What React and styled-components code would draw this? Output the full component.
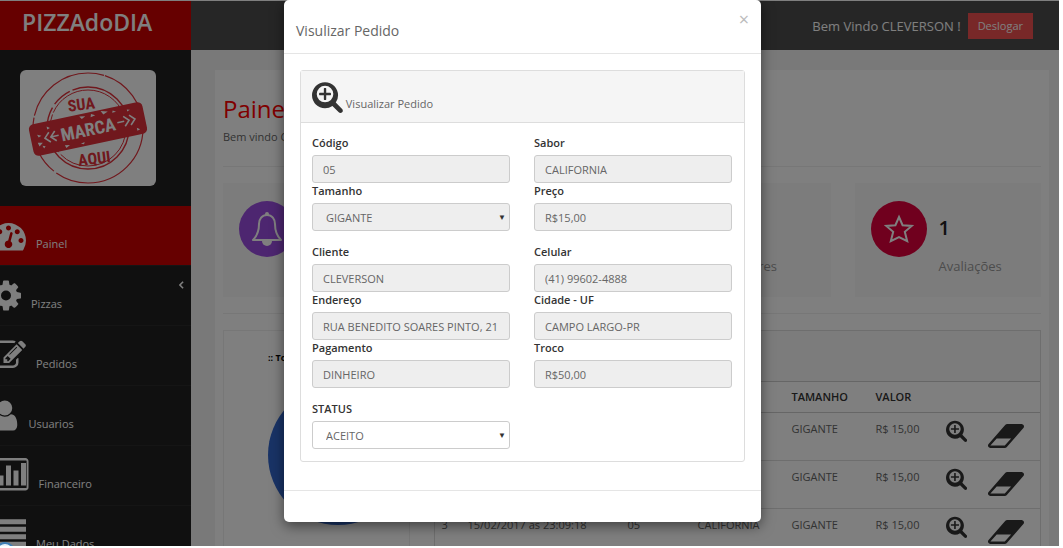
import styled, { createGlobalStyle } from "styled-components";

const GlobalStyle = createGlobalStyle`
  * {
    box-sizing: border-box;
  }
  body {
    margin: 0;
    background: #fff;
    font-family: "Open Sans", "Noto Sans", sans-serif;
    font-size: 11px;
    line-height: 18px;
    color: #666;
  }
  input,
  select,
  button {
    font-family: inherit;
  }
`;

const icons = {
  painel: {
    box: "0 0 1792 1792",
    d: "M384 1152q0-53-37.5-90.5t-90.5-37.5-90.5 37.5-37.5 90.5 37.5 90.5 90.5 37.5 90.5-37.5 37.5-90.5zm192-448q0-53-37.5-90.5t-90.5-37.5-90.5 37.5-37.5 90.5 37.5 90.5 90.5 37.5 90.5-37.5 37.5-90.5zm428 481l101-382q6-26-7.5-48.5t-38.5-29.5-48 6.5-30 39.5l-101 382q-60 5-107 43.5t-63 98.5q-20 77 20 146t117 89 146-20 89-117q16-60-6-117t-72-91zm660-33q0-53-37.5-90.5t-90.5-37.5-90.5 37.5-37.5 90.5 37.5 90.5 90.5 37.5 90.5-37.5 37.5-90.5zm-640-640q0-53-37.5-90.5t-90.5-37.5-90.5 37.5-37.5 90.5 37.5 90.5 90.5 37.5 90.5-37.5 37.5-90.5zm448 192q0-53-37.5-90.5t-90.5-37.5-90.5 37.5-37.5 90.5 37.5 90.5 90.5 37.5 90.5-37.5 37.5-90.5zm320 448q0 261-141 483-19 29-54 29h-1402q-35 0-54-29-141-221-141-483 0-182 71-348t191-286 286-191 348-71 348 71 286 191 191 286 71 348z",
  },
  pizzas: {
    box: "0 0 1536 1792",
    d: "M1024 896q0-106-75-181t-181-75-181 75-75 181 75 181 181 75 181-75 75-181zm512-109v222q0 12-8 23t-20 13l-185 28q-19 54-39 91 35 50 107 138 10 12 10 25t-9 23q-27 37-99 108t-94 71q-12 0-26-9l-138-108q-44 23-91 38-16 136-29 186-7 28-36 28h-222q-14 0-24.5-8.5t-11.5-21.5l-28-184q-49-16-90-37l-141 107q-10 9-25 9-14 0-25-11-126-114-165-168-7-10-7-23 0-12 8-23 15-21 51-66.5t54-70.5q-27-50-41-99l-183-27q-13-2-21-12.5t-8-23.5v-222q0-12 8-23t19-13l186-28q14-46 39-92-40-57-107-138-10-12-10-24 0-10 9-23 26-36 98.5-107.5t94.5-71.5q13 0 26 10l138 107q44-23 91-38 16-136 29-186 7-28 36-28h222q14 0 24.5 8.5t11.5 21.5l28 184q49 16 90 37l142-107q9-9 24-9 13 0 25 10 129 119 165 170 7 8 7 22 0 12-8 23-15 21-51 66.5t-54 70.5q26 50 41 98l183 28q13 2 21 12.5t8 23.5z",
  },
  pedidos: {
    box: "0 0 1792 1792",
    d: "M888 1184l116-116-152-152-116 116v56h96v96h56zm440-720q-16-16-33 1l-350 350q-17 17-1 33t33-1l350-350q17-17 1-33zm80 594v190q0 119-84.5 203.5t-203.5 84.5h-832q-119 0-203.5-84.5t-84.5-203.5v-832q0-119 84.5-203.5t203.5-84.5h832q63 0 117 25 15 7 18 23 3 17-9 29l-49 49q-14 14-32 8-23-6-45-6h-832q-66 0-113 47t-47 113v832q0 66 47 113t113 47h832q66 0 113-47t47-113v-126q0-13 9-22l64-64q15-15 35-7t20 29zm-96-738l288 288-672 672h-288v-288zm444 132l-92 92-288-288 92-92q28-28 68-28t68 28l152 152q28 28 28 68t-28 68z",
  },
  usuarios: {
    box: "-64 0 1408 1792",
    d: "M1280 1399q0 109-62.5 187t-150.5 78h-854q-88 0-150.5-78t-62.5-187q0-85 8.5-160.5t31.5-152 58.5-131 94-89 134.5-34.5q131 128 313 128t313-128q76 0 134.5 34.5t94 89 58.5 131 31.5 152 8.5 160.5zm-256-887q0 159-112.5 271.5t-271.5 112.5-271.5-112.5-112.5-271.5 112.5-271.5 271.5-112.5 271.5 112.5 112.5 271.5z",
  },
  financeiro: {
    box: "0 0 1920 1792",
    d: "M640 896v512h-256v-512h256zm384-512v1024h-256v-1024h256zm384 256v768h-256v-768h256zm384-384v1152h-256v-1152h256zm0-128h-1664q-13 0-22.5 9.5t-9.5 22.5v1344q0 13 9.5 22.5t22.5 9.5h1664q13 0 22.5-9.5t9.5-22.5v-1344q0-13-9.5-22.5t-22.5-9.5zm128 32v1344q0 66-47 113t-113 47h-1600q-66 0-113-47t-47-113v-1344q0-66 47-113t113-47h1600q66 0 113 47t47 113z",
  },
  dados: {
    box: "0 0 1792 1792",
    d: "M0 64h1792v256h-1792zM0 448h1792v256h-1792zM0 832h1792v256h-1792zM0 1216h1792v256h-1792z",
  },
  zoom: {
    box: "0 64 1664 1728",
    d: "M1024 736v64q0 13-9.5 22.5t-22.5 9.5h-224v224q0 13-9.5 22.5t-22.5 9.5h-64q-13 0-22.5-9.5t-9.5-22.5v-224h-224q-13 0-22.5-9.5t-9.5-22.5v-64q0-13 9.5-22.5t22.5-9.5h224v-224q0-13 9.5-22.5t22.5-9.5h64q13 0 22.5 9.5t9.5 22.5v224h224q13 0 22.5 9.5t9.5 22.5zm128 32q0-185-131.5-316.5t-316.5-131.5-316.5 131.5-131.5 316.5 131.5 316.5 316.5 131.5 316.5-131.5 131.5-316.5zm512 896q0 53-37.5 90.5t-90.5 37.5q-54 0-90-38l-343-342q-179 124-399 124-143 0-273.5-55.5t-225-150-150-225-55.5-273.5 55.5-273.5 150-225 225-150 273.5-55.5 273.5 55.5 225 150 150 225 55.5 273.5q0 220-124 399l343 343q37 37 37 90z",
  },
  eraser: {
    box: "0 256 1920 1280",
    d: "M896 1408l336-384h-768l-336 384h768zm1013-1077q15 34 9.5 71.5t-30.5 65.5l-896 1024q-38 44-96 44h-768q-38 0-69.5-20.5t-47.5-54.5q-15-34-9.5-71.5t30.5-65.5l896-1024q38-44 96-44h768q38 0 69.5 20.5t47.5 54.5z",
  },
};

const Icon = ({ name, height }) => (
  <svg viewBox={icons[name].box} height={height} fill="currentColor" aria-hidden="true">
    <path d={icons[name].d} />
  </svg>
);

const menu = [
  { id: "painel", label: "Painel", active: true },
  { id: "pizzas", label: "Pizzas", children: true },
  { id: "pedidos", label: "Pedidos" },
  { id: "usuarios", label: "Usuarios" },
  { id: "financeiro", label: "Financeiro" },
  { id: "dados", label: "Meu Dados" },
];

const stats = [
  { label: "Pedidos", value: 3, color: "#9b4de0", icon: "bell" },
  { label: "Usuarios", value: 1, color: "#4aa9e9" },
  { label: "Sabores", value: 1, color: "#3bb878" },
  { label: "Avaliações", value: 1, color: "#e0003c", icon: "star" },
];

const orders = [
  { id: 1, date: "15/02/2017 as 23:09:18" },
  { id: 2, date: "15/02/2017 as 23:09:18" },
  { id: 3, date: "15/02/2017 as 23:09:18" },
];

const fieldGroups = [
  [
    { id: "codigo", label: "Código", value: "05" },
    { id: "sabor", label: "Sabor", value: "CALIFORNIA" },
    { id: "tamanho", label: "Tamanho", value: "GIGANTE", select: true },
    { id: "preco", label: "Preço", value: "R$15,00" },
  ],
  [
    { id: "cliente", label: "Cliente", value: "CLEVERSON" },
    { id: "celular", label: "Celular", value: "(41) 99602-4888" },
    { id: "endereco", label: "Endereço", value: "RUA BENEDITO SOARES PINTO, 21" },
    { id: "cidade", label: "Cidade - UF", value: "CAMPO LARGO-PR" },
    { id: "pagamento", label: "Pagamento", value: "DINHEIRO" },
    { id: "troco", label: "Troco", value: "R$50,00" },
  ],
  [{ id: "status", label: "STATUS", value: "ACEITO", select: true, editable: true }],
];

const Stamp = () => (
  <svg viewBox="0 0 136 116" width="136" height="116" role="img" aria-label="Sua marca aqui">
    <g fill="none" stroke="#e0303a">
      <circle cx="68" cy="58" r="55" strokeWidth="1.2" strokeDasharray="120 3 60 2 90 1" />
      <circle cx="68" cy="58" r="41" strokeWidth="1.4" strokeDasharray="150 4 20 3" />
      <circle cx="68" cy="58" r="38" strokeWidth="1" strokeDasharray="90 3 40 2" />
    </g>
    <g
      fontFamily="'Liberation Sans Narrow', 'Roboto Condensed', 'Open Sans Condensed', 'DejaVu Sans Condensed', sans-serif"
      fontWeight="700"
      textAnchor="middle"
    >
      <text x="62" y="40" fontSize="16" fill="#e0303a" transform="rotate(-7 62 40)">SUA</text>
      <text x="75" y="94" fontSize="16" fill="#e0303a" transform="rotate(-7 75 94)">AQUI</text>
      <g transform="rotate(-12 68 59)">
        <rect x="10" y="43" width="116" height="32" rx="5" fill="#e0303a" />
        <text x="68" y="66" fontSize="18" fill="#fff">MARCA</text>
        <path
          d="M29 54l-5 5 5 5M35 54l-5 5 5 5M31 59h7M105 54l5 5-5 5M111 54l5 5-5 5M98 59h7"
          fill="none"
          stroke="#fff"
          strokeWidth="1.6"
        />
        <path
          d="M17 54l4 2-3 1zM16 62l5 1-4 3zM20 66l3 1-2 2zM28 48l3 2-3 1zM62 45l6 1-4 2zM74 45l4 2-5 1zM84 44l7 2-5 2zM96 46l3 2-4 0zM116 68l3 2-3 1zM42 70l5 1-4 2zM58 72l4-1-1 2zM110 48l3 1-3 1z"
          fill="#fff"
        />
      </g>
    </g>
  </svg>
);

const Bell = () => (
  <svg viewBox="0 0 32 36" width="32" height="36" fill="none" stroke="#fff" strokeWidth="2" aria-hidden="true">
    <path d="M16 4c-5 0-8 4-8 9 0 8-2 12-6 16h28c-4-4-6-8-6-16 0-5-3-9-8-9z" strokeLinejoin="round" />
    <circle cx="16" cy="3" r="1" />
    <path d="M11 30a5 5 0 0 0 10 0z" fill="#fff" stroke="none" />
  </svg>
);

const Star = () => (
  <svg viewBox="0 0 30 30" width="30" height="30" fill="none" stroke="#fff" strokeWidth="2" aria-hidden="true">
    <path d="M15 3l3.6 8.2 9.2.7-7 5.9 2.4 9.4-8.2-4-8.2 4 2.4-9.4-7-5.9 9.2-.7z" />
  </svg>
);

const Field = ({ id, label, value, select, editable }) => (
  <div>
    <Label htmlFor={id}>{label}</Label>
    {select ? (
      <SelectBox>
        <Select id={id} defaultValue={value} disabled={!editable}>
          <option>{value}</option>
        </Select>
      </SelectBox>
    ) : (
      <Input id={id} defaultValue={value} disabled />
    )}
  </div>
);

const App = () => {
  return (
    <Shell>
      <GlobalStyle />
      <TopBar>
        <Brand href="#">PIZZAdoDIA</Brand>
        <UserArea>
          Bem Vindo CLEVERSON !<LogoutButton>Deslogar</LogoutButton>
        </UserArea>
      </TopBar>
      <Body>
        <Sidebar>
          <LogoBox>
            <Stamp />
          </LogoBox>
          <nav>
            {menu.map((item) => (
              <MenuItem key={item.id} href="#" $active={item.active}>
                <Icon name={item.id} height={35} />
                {item.label}
                {item.children && (
                  <Arrow viewBox="0 0 6 10">
                    <path d="M5 1L1 5l4 4" />
                  </Arrow>
                )}
              </MenuItem>
            ))}
          </nav>
        </Sidebar>
        <Content>
          <Page>
            <Title>Painel</Title>
            <Welcome>Bem vindo CLEVERSON</Welcome>
            <Divider />
            <Columns>
              {stats.map((stat) => (
                <StatCard key={stat.label}>
                  <StatIcon $color={stat.color}>
                    {stat.icon === "bell" && <Bell />}
                    {stat.icon === "star" && <Star />}
                  </StatIcon>
                  <div>
                    <StatValue>{stat.value}</StatValue>
                    <StatLabel>{stat.label}</StatLabel>
                  </div>
                </StatCard>
              ))}
            </Columns>
            <Divider />
            <Columns>
              <ChartPanel>
                <ChartTitle>:: Total</ChartTitle>
                <svg viewBox="0 0 140 140" width="140" height="140" role="img" aria-label="Total de pedidos">
                  <circle cx="70" cy="70" r="70" fill="#3366cc" />
                </svg>
              </ChartPanel>
              <OrdersPanel>
                <OrdersHeading />
                <Table>
                  <thead>
                    <tr>
                      <Th $width={26}>#</Th>
                      <Th $width={160}>DATA</Th>
                      <Th $width={70}>COD</Th>
                      <Th $width={94}>SABOR</Th>
                      <Th $width={84}>TAMANHO</Th>
                      <Th $width={70}>VALOR</Th>
                      <Th $width={42} />
                      <Th />
                    </tr>
                  </thead>
                  <tbody>
                    {orders.map((order) => (
                      <tr key={order.id}>
                        <Td>{order.id}</Td>
                        <Td>{order.date}</Td>
                        <Td>05</Td>
                        <Td>CALIFORNIA</Td>
                        <Td>GIGANTE</Td>
                        <Td>R$ 15,00</Td>
                        <Td>
                          <IconButton aria-label="Visualizar">
                            <Icon name="zoom" height={22} />
                          </IconButton>
                        </Td>
                        <Td>
                          <IconButton aria-label="Apagar" $low>
                            <Icon name="eraser" height={24} />
                          </IconButton>
                        </Td>
                      </tr>
                    ))}
                  </tbody>
                </Table>
              </OrdersPanel>
            </Columns>
          </Page>
        </Content>
      </Body>
      <Backdrop>
        <Modal role="dialog" aria-labelledby="modal-title">
          <ModalHeader>
            <ModalTitle id="modal-title">Visulizar Pedido</ModalTitle>
            <CloseButton aria-label="Fechar">×</CloseButton>
          </ModalHeader>
          <ModalBody>
            <Panel>
              <PanelHeading>
                <Icon name="zoom" height={32} />
                Visualizar Pedido
              </PanelHeading>
              <Form>
                {fieldGroups.map((fields) => (
                  <FieldGroup key={fields[0].id}>
                    {fields.map((field) => (
                      <Field key={field.id} {...field} />
                    ))}
                  </FieldGroup>
                ))}
              </Form>
            </Panel>
          </ModalBody>
          <ModalFooter />
        </Modal>
      </Backdrop>
      <StatusBubble />
    </Shell>
  );
};

const Shell = styled.div`
  position: relative;
  display: flex;
  flex-direction: column;
  height: calc(100vh - 2px);
  margin-right: 4px;
  overflow: hidden;
`;

const TopBar = styled.header`
  display: flex;
  flex: none;
  height: 50px;
  border-top: 1px solid #fff;
  background: #4d4d4d;
`;

const Brand = styled.a`
  width: 191px;
  padding: 0 22px;
  background: #cc0000;
  color: #fff;
  font-size: 23px;
  font-weight: 600;
  line-height: 42px;
  text-decoration: none;
`;

const UserArea = styled.div`
  display: flex;
  flex: 1;
  justify-content: flex-end;
  align-items: center;
  gap: 7px;
  padding-right: 26px;
  color: #fff;
  font-size: 13px;
`;

const LogoutButton = styled.button`
  height: 26px;
  padding: 0 10px;
  border: none;
  background: #f05050;
  color: #fff;
  font-size: 11px;
  cursor: pointer;
`;

const Body = styled.div`
  display: flex;
  flex: 1;
  min-height: 0;
`;

const Sidebar = styled.aside`
  flex: none;
  width: 191px;
  overflow: hidden;
  background: #202020;
`;

const LogoBox = styled.div`
  width: 136px;
  height: 116px;
  margin: 20px;
  border-radius: 6px;
  background: #fff;
`;

const MenuItem = styled.a`
  display: flex;
  align-items: flex-end;
  gap: 10px;
  height: 60px;
  padding-bottom: 12px;
  border-bottom: 1px solid #2a2a2a;
  background: ${({ $active }) => ($active ? "#cc0000" : "transparent")};
  color: #fff;
  text-decoration: none;
  > svg:first-child {
    margin-left: -9px;
  }
`;

const Arrow = styled.svg`
  width: 5px;
  height: 8px;
  margin: 0 7px 24px auto;
  fill: none;
  stroke: #fff;
  stroke-width: 2;
`;

const Content = styled.main`
  flex: 1;
  min-width: 0;
  padding: 20px 10px 0 24px;
  background: #f3f3f3;
`;

const Page = styled.div`
  padding: 24px 8px;
  background: #fff;
`;

const Title = styled.h1`
  margin: 0;
  color: #ff0000;
  font-size: 24px;
  font-weight: 400;
  line-height: 30px;
`;

const Welcome = styled.p`
  margin: 4px 0 20px;
`;

const Divider = styled.hr`
  margin: 16px 0;
  border: none;
  border-top: 1px solid #eee;
`;

const Columns = styled.div`
  display: grid;
  grid-template-columns: repeat(4, minmax(0, 1fr));
  gap: 24px;
`;

const StatCard = styled.div`
  display: flex;
  gap: 12px;
  height: 114px;
  padding: 18px 16px;
  background: #f9f9f9;
`;

const StatIcon = styled.div`
  display: flex;
  flex: none;
  justify-content: center;
  align-items: center;
  width: 56px;
  height: 56px;
  border-radius: 50%;
  background: ${({ $color }) => $color};
`;

const StatValue = styled.div`
  padding-top: 14px;
  color: #222;
  font-size: 20px;
  font-weight: 600;
  line-height: 26px;
`;

const StatLabel = styled.div`
  padding-top: 16px;
  color: #999;
  font-size: 13px;
`;

const ChartPanel = styled.section`
  padding: 18px 0 18px 44px;
  border: 1px solid #eee;
`;

const ChartTitle = styled.h2`
  margin: 0 0 18px;
  color: #000;
  font-size: 9px;
  font-weight: 700;
  line-height: 18px;
`;

const OrdersPanel = styled.section`
  grid-column: span 3;
  border: 1px solid #ddd;
`;

const OrdersHeading = styled.div`
  height: 50px;
  background: #f9f9f9;
`;

const Table = styled.table`
  width: 100%;
  border-collapse: collapse;
  table-layout: fixed;
  text-align: left;
`;

const Th = styled.th`
  width: ${({ $width }) => ($width ? `${$width}px` : "auto")};
  height: 31px;
  padding: 0 7px;
  border-top: 1px solid #ccc;
  border-bottom: 1px solid #ccc;
  color: #333;
  font-weight: 600;
`;

const Td = styled.td`
  height: 48px;
  padding: 7px 0 0 7px;
  border-bottom: 1px solid #ddd;
  vertical-align: top;
`;

const IconButton = styled.button`
  display: block;
  padding: ${({ $low }) => ($low ? "4px 0 0" : "0")};
  border: none;
  background: none;
  color: #333;
  cursor: pointer;
  svg {
    display: block;
  }
`;

const Backdrop = styled.div`
  position: absolute;
  inset: 0;
  display: flex;
  justify-content: center;
  align-items: flex-start;
  padding-right: 14px;
  background: rgba(0, 0, 0, 0.5);
`;

const Modal = styled.div`
  width: 100%;
  max-width: 477px;
  border-radius: 5px;
  background: #fff;
  box-shadow: 0 4px 13px rgba(0, 0, 0, 0.5);
`;

const ModalHeader = styled.div`
  display: flex;
  justify-content: space-between;
  align-items: flex-start;
  height: 54px;
  padding: 10px 12px;
  border-bottom: 1px solid #e5e5e5;
`;

const ModalTitle = styled.h2`
  margin: 10px 0 0;
  font-size: 14px;
  font-weight: 400;
  line-height: 22px;
`;

const CloseButton = styled.button`
  padding: 0;
  border: none;
  background: none;
  color: #bbb;
  font-size: 18px;
  line-height: 18px;
  cursor: pointer;
`;

const ModalBody = styled.div`
  padding: 16px 16px 28px;
`;

const Panel = styled.section`
  border: 1px solid #ddd;
  border-radius: 3px;
`;

const PanelHeading = styled.div`
  display: flex;
  align-items: flex-end;
  gap: 3px;
  height: 52px;
  padding: 0 11px 9px;
  border-bottom: 1px solid #ddd;
  background: #f5f5f5;
  svg {
    color: #333;
  }
`;

const Form = styled.form`
  display: grid;
  gap: 13px;
  padding: 12px 12px 12px 11px;
`;

const FieldGroup = styled.div`
  display: grid;
  grid-template-columns: 1fr 1fr;
  column-gap: 24px;
`;

const Label = styled.label`
  display: block;
  height: 20px;
  color: #333;
  line-height: 16px;
  font-weight: 600;
`;

const Input = styled.input`
  display: block;
  width: 100%;
  height: 28px;
  padding: 0 10px;
  border: 1px solid #ccc;
  border-radius: 3px;
  background: #eee;
  color: #666;
  font-size: 11px;
`;

const SelectBox = styled.div`
  position: relative;
  &::after {
    content: "▼";
    position: absolute;
    top: 5px;
    right: 4px;
    color: #333;
    font-size: 8px;
    pointer-events: none;
  }
`;

const Select = styled.select`
  display: block;
  width: 100%;
  height: 28px;
  padding: 0 13px;
  appearance: none;
  border: 1px solid #ccc;
  border-radius: 3px;
  background: #fff;
  color: #666;
  font-size: 11px;
  opacity: 1;
  &:disabled {
    background: #eee;
  }
`;

const ModalFooter = styled.div`
  height: 32px;
  border-top: 1px solid #e5e5e5;
`;

const StatusBubble = styled.div`
  position: absolute;
  bottom: -16px;
  left: -5px;
  width: 20px;
  height: 20px;
  border: 2px solid #3f7fb5;
  border-radius: 50%;
  background: #e6f3fb;
`;

export default App;
